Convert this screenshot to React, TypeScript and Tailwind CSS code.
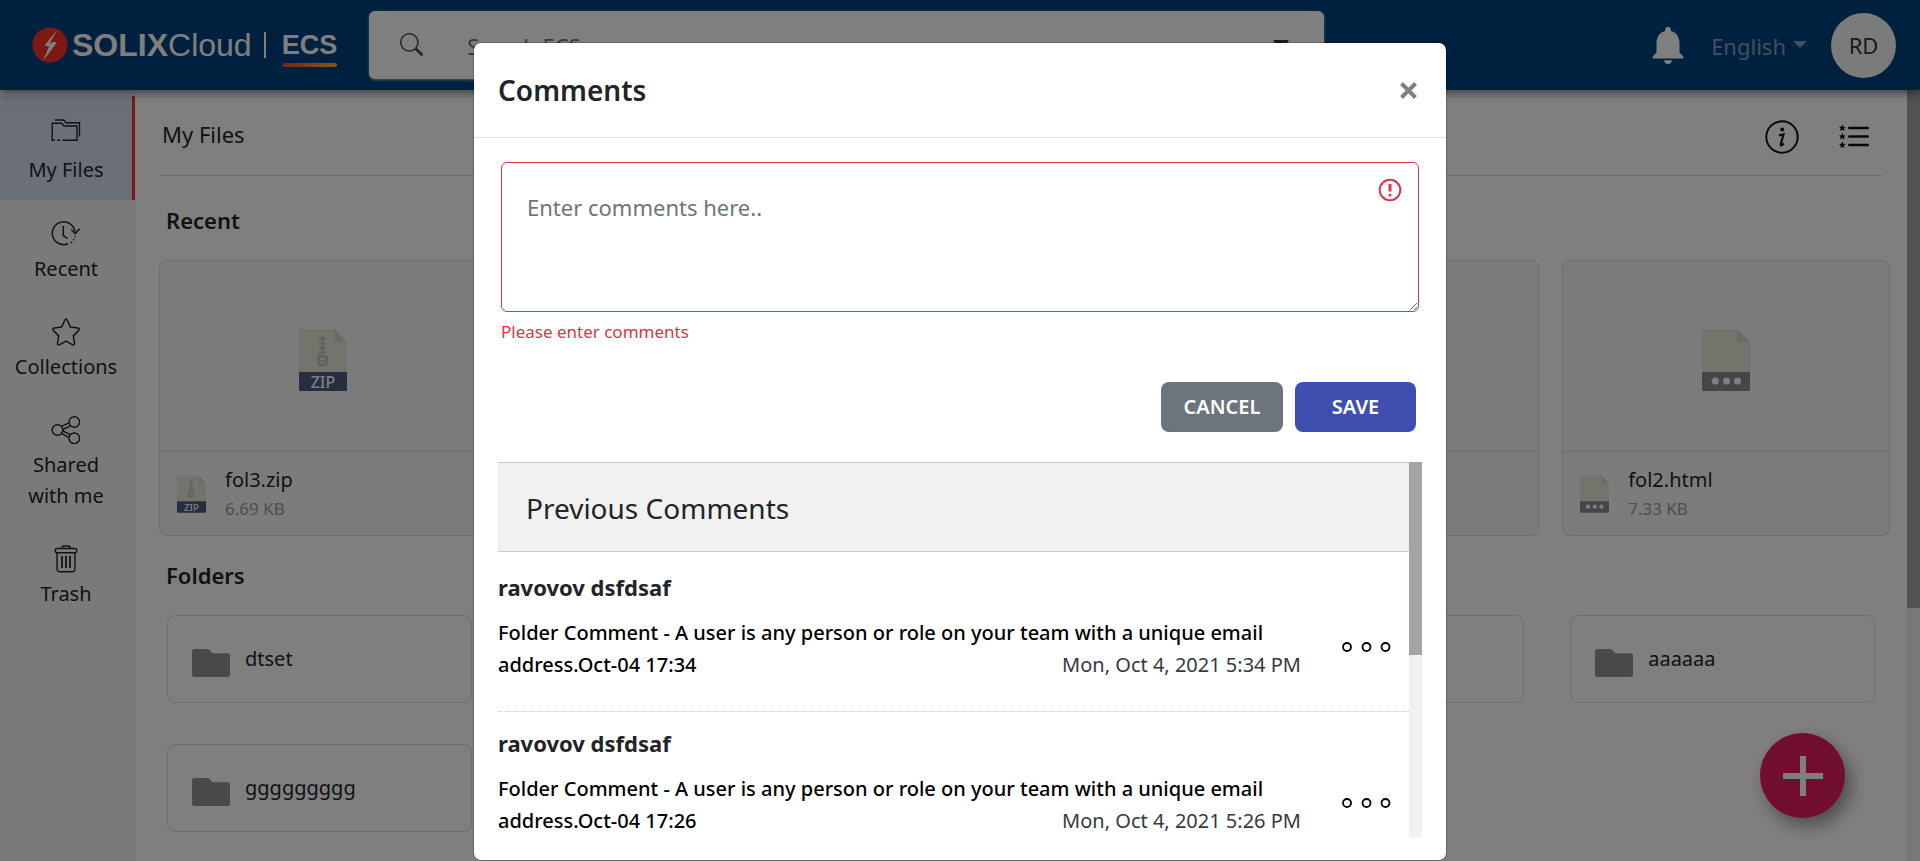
import React, { useState } from "react";
import { MdNotifications } from "react-icons/md";
import { BsSearch } from "react-icons/bs";

type FileKind = "zip" | "html";
type RecentFile = { id: number; kind?: FileKind; name?: string; size?: string };
type Folder = { id: number; name?: string };
type Comment = { id: number; author: string; text: string; date: string };

const recentFiles: RecentFile[] = [
  { id: 1, kind: "zip", name: "fol3.zip", size: "6.69 KB" },
  { id: 2 },
  { id: 3 },
  { id: 4 },
  { id: 5, kind: "html", name: "fol2.html", size: "7.33 KB" },
];

const folders: Folder[] = [
  { id: 1, name: "dtset" },
  { id: 2 },
  { id: 3 },
  { id: 4 },
  { id: 5, name: "aaaaaa" },
  { id: 6, name: "ggggggggg" },
];

const comments: Comment[] = [
  {
    id: 1,
    author: "ravovov dsfdsaf",
    text: "Folder Comment - A user is any person or role on your team with a unique email address.Oct-04 17:34",
    date: "Mon, Oct 4, 2021 5:34 PM",
  },
  {
    id: 2,
    author: "ravovov dsfdsaf",
    text: "Folder Comment - A user is any person or role on your team with a unique email address.Oct-04 17:26",
    date: "Mon, Oct 4, 2021 5:26 PM",
  },
];

function FilesIcon() {
  return (
    <svg viewBox="0 0 30 28" className="h-7 w-[30px]" fill="none" stroke="currentColor" strokeWidth="1.4">
      <path d="M4 24.300H1.200V7.200H10.500L13 10H26V24.300H11.500M6 24.300H9" />
      <path d="M4 4H12.500L15 6.700H28.500V20.500" />
    </svg>
  );
}

function RecentIcon() {
  return (
    <svg viewBox="0 0 30 28" className="h-7 w-[30px]" fill="none" stroke="currentColor" strokeWidth="1.5">
      <path d="M17 23.800A11.400 11.400 0 1 1 24 11.500" />
      <path d="M20.300 9.500L24.200 13.600L28.600 8.800" />
      <path d="M12.300 6V15.500L16.500 18.500" />
      <path d="M19.500 23L21 22M22.500 20.300L23.200 19.200M24 17L24.200 16" />
    </svg>
  );
}

function StarIcon() {
  return (
    <svg viewBox="0 0 30 28" className="h-7 w-[30px]" fill="none" stroke="currentColor" strokeWidth="1.500" strokeLinejoin="round">
      <path d="M13.700 2.300Q15 -.3 16.300 2.300L19.300 8.900L26.800 10Q29.400 10.500 27.500 12.600L22.300 17.900L23.500 25Q23.700 27.600 21.300 26.600L15 23.100L8.700 26.600Q6.300 27.600 6.500 25L7.700 17.900L2.500 12.600Q.6 10.500 3.200 10L10.700 8.900Z" />
    </svg>
  );
}

function ShareIcon() {
  return (
    <svg viewBox="0 0 30 28" className="h-7 w-[30px]" fill="none" stroke="currentColor" strokeWidth="1.400">
      <circle cx="6.500" cy="14" r="5.300" />
      <circle cx="23.300" cy="6" r="5.300" />
      <circle cx="23.300" cy="22.300" r="5.300" />
      <path d="M10.500 10.400L18 6.800M11.700 13.500L19.500 9.800M11.700 15L19.500 18.600M10.500 17.700L18 21.300" />
    </svg>
  );
}

function TrashIcon() {
  return (
    <svg viewBox="0 0 30 28" className="h-7 w-[30px]" fill="none" stroke="currentColor" strokeWidth="1.400">
      <rect x="4.200" y="3.500" width="21.600" height="4.200" rx="2" />
      <path d="M10.500 3.500Q10.500 1 13 1H17Q19.500 1 19.500 3.500M6 7.700V23.500Q6 26.800 9.300 26.800H20.700Q24 26.800 24 23.500V7.700" />
      <path d="M11 11V23M15 11V23M19 11V23" strokeWidth="1.800" />
    </svg>
  );
}

function StarListIcon() {
  const rows = [4, 12.500, 21];
  return (
    <svg viewBox="0 0 30 25" className="h-[25px] w-[30px]" fill="currentColor">
      {rows.map((y) => (
        <g key={y} transform={`translate(0 ${y})`}>
          <path d="M3.300-3.600L4.300-1.200L6.800-1.100L4.900.5L5.500 3L3.300 1.700L1.100 3L1.700.5L-.2-1.100L2.300-1.200Z" />
          <rect x="9" y="-1.200" width="21" height="2.400" rx="1.200" />
        </g>
      ))}
    </svg>
  );
}

function FileIcon({ kind, className }: { kind: FileKind; className: string }) {
  return (
    <svg viewBox="0 0 48 62" className={className}>
      <path d="M1.500 0H35L48 13V44H0V1.500Q0 0 1.500 0Z" fill="#e9e9da" />
      <path d="M35 0L48 13H35Z" fill="#d6d4c6" />
      {kind === "zip" ? (
        <>
          <g stroke="#c7bfba" fill="none">
            <path d="M23.500 7V27" strokeWidth="2" />
            <path d="M20 10H27M20 14.500H27M20 19H27M20 23.500H27" strokeWidth="2" />
            <path d="M19.500 27.500H27.500V32Q27.500 36.500 23.500 36.500Q19.500 36.500 19.500 32Z" strokeWidth="2.600" />
            <path d="M21.500 32H25.500" strokeWidth="2" />
          </g>
          <path d="M0 43H48V60.500Q48 62 46.500 62H1.500Q0 62 0 60.500Z" fill="#525a80" />
          <text x="24" y="58.500" textAnchor="middle" fontSize="16" fontWeight="500" fill="#fff" fontFamily="Noto Sans, sans-serif">
            ZIP
          </text>
        </>
      ) : (
        <>
          <path d="M0 43H48V60.500Q48 62 46.500 62H1.500Q0 62 0 60.500Z" fill="#8f8b90" />
          <g fill="#fff">
            <circle cx="13.300" cy="52" r="3.500" />
            <circle cx="24.500" cy="52" r="3.500" />
            <circle cx="35.500" cy="52" r="3.500" />
          </g>
        </>
      )}
    </svg>
  );
}

function FolderIcon() {
  return (
    <svg viewBox="0 0 38 28" className="h-7 w-[38px]" fill="#929292">
      <path d="M2.500 0H15.500Q16.500 0 17.200.8L20.500 4.300H35.500Q38 4.300 38 6.800V25.500Q38 28 35.500 28H2.500Q0 28 0 25.500V2.500Q0 0 2.500 0Z" />
    </svg>
  );
}

function Logo() {
  return (
    <a href="#home" className="flex items-center text-white">
      <svg viewBox="0 0 36 36" className="h-9 w-9">
        <circle cx="18" cy="18" r="17.600" fill="#f8322a" />
        <path d="M25.500 2.500L17.500 16.500L22 14.800L24.800 15.500L11 34L17 19.500L12.500 18.500Z" fill="#fff" />
      </svg>
      <span className="ml-1 flex font-['Liberation_Sans',Arial,sans-serif] text-[32px] leading-9">
        <span className="font-bold">SOLIX</span>
        <span>Cloud</span>
      </span>
      <span className="ml-3 h-[26px] w-0.5 bg-white" />
      <span className="ml-4 flex flex-col pt-2">
        <span className="font-['Liberation_Sans',Arial,sans-serif] text-[27px] font-bold leading-7">ECS</span>
        <span className="mt-1 h-1 rounded-full bg-gradient-to-r from-[#e8402c] to-[#f0b840]" />
      </span>
    </a>
  );
}

function Header() {
  return (
    <header className="relative z-10 flex h-[90px] shrink-0 items-center bg-[#00407e] pl-8 pr-6 shadow-[0_3px_9px_rgba(0,0,0,0.5)]">
      <Logo />
      <div className="ml-8 flex h-[68px] w-[955px] items-center rounded-md bg-white pl-[31px] pr-[35px] shadow-[0_1px_3px_rgba(255,255,255,0.6)]">
        <BsSearch className="mb-0.5 size-[23px] text-[#495057]" />
        <input
          aria-label="Search ECS"
          placeholder="Search ECS"
          className="ml-11 min-w-0 flex-1 bg-transparent pt-0.5 text-[22px] outline-none placeholder:text-[#6c757d]"
        />
        <button aria-label="Search options">
          <svg viewBox="0 0 16 10" className="h-2.5 w-4" fill="#343a40">
            <path d="M1 0H15Q16 0 15.500 1L9 9Q8 10 7 9L.5 1Q0 0 1 0Z" />
          </svg>
        </button>
      </div>
      <div className="ml-auto flex items-center">
        <button aria-label="Notifications" className="text-white">
          <MdNotifications className="size-[46px]" />
        </button>
        <button className="ml-5 flex items-center gap-[7px] pt-0.5 text-[22px] text-[#80a0bf]">
          English
          <svg viewBox="0 0 14 7" className="mb-1 h-[7px] w-3.5" fill="currentColor">
            <path d="M0 0H14L7 7Z" />
          </svg>
        </button>
        <button className="ml-6 size-[65px] rounded-full bg-[#f3f8f5] text-[22px] text-[#333]">RD</button>
      </div>
    </header>
  );
}

function NavItem({ icon, label, active }: { icon: React.ReactNode; label: string; active?: boolean }) {
  return (
    <a
      href={"#" + label.toLowerCase().replace(/ /g, "-")}
      className={
        "flex flex-col items-center border-r-3 px-3 pt-5 text-center text-[20px] leading-[31px] text-[#212529] " +
        (active ? "gap-2.5 border-[#f4302e] bg-[#d6e0f0] pb-[15px]" : "gap-[5px] border-transparent pb-3.5")
      }
    >
      {icon}
      <span className={label.startsWith("Shared") ? "w-20" : ""}>{label}</span>
    </a>
  );
}

function Sidebar() {
  return (
    <nav className="w-[135px] shrink-0 bg-[#f5f5f5] pt-1.5">
      <NavItem icon={<FilesIcon />} label="My Files" active />
      <NavItem icon={<RecentIcon />} label="Recent" />
      <NavItem icon={<StarIcon />} label="Collections" />
      <NavItem icon={<ShareIcon />} label="Shared with me" />
      <NavItem icon={<TrashIcon />} label="Trash" />
    </nav>
  );
}

function FileCard({ file }: { file: RecentFile }) {
  return (
    <article className="flex h-[276px] flex-col rounded-lg border border-[#dcdcdc] bg-[#f9f9f9]">
      <div className="flex flex-1 items-center justify-center rounded-t-lg border-b border-[#dcdcdc] bg-[#f7f7f7] pt-2">
        {file.kind && <FileIcon kind={file.kind} className="h-[62px] w-12" />}
      </div>
      <div className="flex h-[83px] items-center pl-[17px]">
        {file.kind && <FileIcon kind={file.kind} className="h-[38px] w-[29px]" />}
        <div className="ml-[19px]">
          <h3 className="text-[20px] leading-[30px] text-[#212529]">{file.name}</h3>
          <p className="text-[17px] leading-7 text-[#9b9b9b]">{file.size}</p>
        </div>
      </div>
    </article>
  );
}

function FolderCard({ folder }: { folder: Folder }) {
  return (
    <a href="#folder" className="flex h-[88px] items-center rounded-lg border border-[#dcdcdc] pl-6">
      {folder.name && (
        <>
          <span className="mt-2">
            <FolderIcon />
          </span>
          <span className="ml-[15px] text-[20px] leading-[30px] text-[#212529]">{folder.name}</span>
        </>
      )}
    </a>
  );
}

function Files() {
  return (
    <main className="min-w-0 flex-1 overflow-hidden bg-white pl-6 pr-[17px]">
      <div className="mr-[7px] flex h-[86px] items-center justify-between border-b border-[#dcdcdc] pl-[3px] pr-3.5 pt-2">
        <h1 className="pb-1 text-[22px] text-[#212529]">My Files</h1>
        <div className="flex items-center gap-10 text-[#111]">
          <button aria-label="Details">
            <svg viewBox="0 0 34 34" className="size-[34px]" fill="none" stroke="currentColor" strokeWidth="2">
              <circle cx="17" cy="17" r="15.700" />
              <circle cx="17.200" cy="9.600" r="2" fill="currentColor" stroke="none" />
              <path d="M14 15.300L18.500 14.500L15.700 24.500Q15.600 26 17 25.200L19 23.500" strokeWidth="2.200" />
            </svg>
          </button>
          <button aria-label="List view">
            <StarListIcon />
          </button>
        </div>
      </div>
      <h2 className="flex h-[84px] items-center pl-[7px] pt-1 text-[22px] font-semibold text-[#212529]">Recent</h2>
      <section className="grid grid-cols-5 gap-[23px]">
        {recentFiles.map((f) => (
          <FileCard key={f.id} file={f} />
        ))}
      </section>
      <h2 className="flex h-[79px] items-center pl-[7px] text-[22px] font-semibold text-[#212529]">Folders</h2>
      <section className="grid grid-cols-5 gap-x-[46px] gap-y-[41px] pl-2 pr-[15px]">
        {folders.map((f) => (
          <FolderCard key={f.id} folder={f} />
        ))}
      </section>
    </main>
  );
}

function CommentRow({ comment }: { comment: Comment }) {
  return (
    <li className="flex h-[156px] border-b border-dotted border-[#ccc] pt-[13px]">
      <div className="min-w-0 flex-1">
        <h4 className="text-[22px] font-bold leading-9 text-[#212529]">{comment.author}</h4>
        <p className="mt-3 max-w-[803px] text-[20px] font-medium leading-8 text-black">
          {comment.text}
          <time className="float-right font-normal text-[#343a40]">{comment.date}</time>
        </p>
      </div>
      <button aria-label="Comment actions" className="mr-[17px] mt-[72px] self-start">
        <svg viewBox="0 0 51 12" className="h-3 w-[51px]" fill="none" stroke="#000" strokeWidth="1.800">
          <circle cx="6" cy="6" r="4" />
          <circle cx="25.500" cy="6" r="4" />
          <circle cx="44.500" cy="6" r="4" />
        </svg>
      </button>
    </li>
  );
}

function CommentsDialog() {
  const [text, setText] = useState("");
  return (
    <div className="absolute inset-0 z-30 flex items-start justify-center overflow-hidden bg-black/50 px-4 pt-[42px]">
      <div role="dialog" aria-labelledby="dialog-title" className="w-full max-w-[974px] rounded-lg border border-black/20 bg-white bg-clip-padding">
        <div className="flex h-[95px] items-center justify-between border-b border-[#dee2e6] pl-6 pr-[29px]">
          <h2 id="dialog-title" className="text-[28px] font-semibold text-[#212529]">
            Comments
          </h2>
          <button aria-label="Close">
            <svg viewBox="0 0 17 17" className="size-[17px]" stroke="#808080" strokeWidth="4">
              <path d="M1.500 1.500L15.500 15.500M15.500 1.500L1.500 15.500" />
            </svg>
          </button>
        </div>
        <div className="px-6 pt-6 pb-[23px]">
          <div className="relative mx-[3px]">
            <textarea
              aria-label="Comment"
              placeholder="Enter comments here.."
              value={text}
              onChange={(e) => setText(e.target.value)}
              className="block h-[150px] w-full resize rounded-md border border-[#dc3545] px-[25px] pt-7 text-[22px] leading-8 outline-none placeholder:text-[#6c757d]"
            />
            <svg viewBox="0 0 24 24" className="absolute right-[17px] top-4 size-6" fill="none" stroke="#dc3545" strokeWidth="2">
              <circle cx="12" cy="12" r="10.300" />
              <path d="M12 6V13.500" strokeWidth="3" />
              <circle cx="12" cy="17" r="1.500" fill="#dc3545" stroke="none" />
            </svg>
          </div>
          <p className="mx-[3px] mt-1.5 text-[17px] leading-7 text-[#dc3545]">Please enter comments</p>
          <div className="mr-1.5 mt-9 flex justify-end gap-3 text-[20px] font-semibold text-white">
            <button className="h-[50px] w-[122px] rounded-lg bg-[#6c757d]">CANCEL</button>
            <button className="h-[50px] w-[121px] rounded-lg bg-[#3f4fb0]">SAVE</button>
          </div>
          <div className="mt-[30px] flex h-[375px]">
            <div className="min-w-0 flex-1 overflow-hidden">
              <h3 className="flex h-[90px] items-center border-y border-[#c8c8c8] bg-[#f1f1f1] px-7 pt-0.5 text-[28px] text-[#212529]">
                Previous Comments
              </h3>
              <ul className="pt-1">
                {comments.map((c) => (
                  <CommentRow key={c.id} comment={c} />
                ))}
              </ul>
            </div>
            <div className="w-[13px] bg-[#f1f1f1]">
              <div className="h-[193px] bg-[#a4a4a4]" />
            </div>
          </div>
        </div>
      </div>
    </div>
  );
}

export default function App() {
  return (
    <div className="relative flex h-screen flex-col overflow-hidden font-['Noto_Sans','Open_Sans',sans-serif]">
      <Header />
      <div className="flex min-h-0 flex-1">
        <Sidebar />
        <Files />
        <div className="w-[13px] shrink-0 bg-[#f1f1f1]">
          <div className="h-[518px] bg-[#a4a4a4]" />
        </div>
      </div>
      <button
        aria-label="Add"
        className="absolute bottom-[43px] right-[75px] z-20 flex size-[85px] items-center justify-center rounded-full bg-[#e41c5a] shadow-[6px_8px_18px_rgba(0,0,0,0.4)]"
      >
        <svg viewBox="0 0 40 40" className="size-10" stroke="#fff" strokeWidth="6">
          <path d="M20 0V40M0 20H40" />
        </svg>
      </button>
      <CommentsDialog />
    </div>
  );
}
